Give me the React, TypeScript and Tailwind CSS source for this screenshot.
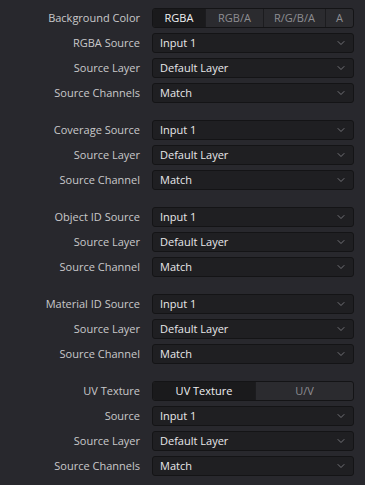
import { ChevronDown } from "lucide-react";

type Row =
    | { kind: "select"; label: string; value: string }
    | { kind: "seg"; label: string; options: string[]; widths: string[] };

const groups: Row[][] = [
    [
        { kind: "seg", label: "Background Color", options: ["RGBA", "RGB/A", "R/G/B/A", "A"], widths: ["w-[52px]", "w-[58px]", "w-[62px]", "flex-1"] },
        { kind: "select", label: "RGBA Source", value: "Input 1" },
        { kind: "select", label: "Source Layer", value: "Default Layer" },
        { kind: "select", label: "Source Channels", value: "Match" },
    ],
    [
        { kind: "select", label: "Coverage Source", value: "Input 1" },
        { kind: "select", label: "Source Layer", value: "Default Layer" },
        { kind: "select", label: "Source Channel", value: "Match" },
    ],
    [
        { kind: "select", label: "Object ID Source", value: "Input 1" },
        { kind: "select", label: "Source Layer", value: "Default Layer" },
        { kind: "select", label: "Source Channel", value: "Match" },
    ],
    [
        { kind: "select", label: "Material ID Source", value: "Input 1" },
        { kind: "select", label: "Source Layer", value: "Default Layer" },
        { kind: "select", label: "Source Channel", value: "Match" },
    ],
    [
        { kind: "seg", label: "UV Texture", options: ["UV Texture", "U/V"], widths: ["w-[102px]", "flex-1"] },
        { kind: "select", label: "Source", value: "Input 1" },
        { kind: "select", label: "Source Layer", value: "Default Layer" },
        { kind: "select", label: "Source Channels", value: "Match" },
    ],
];

export default function App() {
    return (
        <div className="w-[365px] h-[485px] bg-[#28282d] pt-[8px] flex flex-col gap-[17px] font-['Open_Sans',sans-serif] text-[11px] overflow-hidden">
            {groups.map((rows, gi) => (
                <div key={gi} className="flex flex-col gap-[5px]">
                    {rows.map((row, ri) => (
                        <div key={ri} className="flex items-center h-[20px]">
                            <span className="w-[141px] text-right text-[#c9c9cb] pr-[1px]">{row.label}</span>
                            <div className="ml-[11px] w-[202px] h-[20px]">
                                {row.kind === "select" ? (
                                    <div className="h-full flex items-center justify-between rounded-[3px] border border-[#141416] bg-[#1f1f22] pl-[7px] pr-[6px] text-[#e8e8ea]">
                                        <span>{row.value}</span>
                                        <ChevronDown className="w-[12px] h-[12px] text-[#7d7d82]" strokeWidth={1.75} />
                                    </div>
                                ) : (
                                    <div className="h-full flex rounded-[3px] border border-[#141416] bg-[#2b2b2f] overflow-hidden">
                                        {row.options.map((opt, oi) => (
                                            <div
                                                key={opt}
                                                className={
                                                    (oi === 0
                                                        ? "bg-[#1a1a1c] text-[#f0f0f2] font-medium "
                                                        : "text-[#8e8e93] border-l border-[#1c1c1f] ") +
                                                    row.widths[oi] +
                                                    " flex items-center justify-center"
                                                }
                                            >
                                                {opt}
                                            </div>
                                        ))}
                                    </div>
                                )}
                            </div>
                        </div>
                    ))}
                </div>
            ))}
        </div>
    );
}
